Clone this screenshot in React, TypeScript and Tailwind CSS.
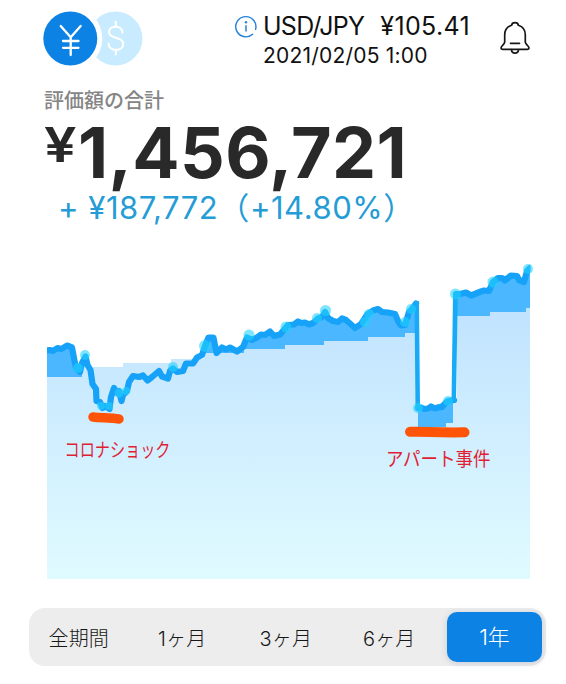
const INTER = "font-['Inter','Noto_Sans_CJK_JP',sans-serif]";

const LEFT_LINE =
  '47,350.5 50,350 53,351 57.5,348 61.5,349 67,345.5 72,347.5 74,358 76,368 80,372 82,363 85.5,356.5 87.5,365 90.5,370 92.5,384 96,389 96.5,401 100,402 102.5,408 105,406 109.5,409 111,397 114,388 117,393 119,391 121.5,401 123,395 127,391 129,382 133,376 139,377 143,375.5 147.5,380.5 152,377 159,371 162,376.5 168,378.5 170,371 173,368.5 177,372 183,371 186,363.5 193,363.5 197,357.5 202,355 205,346 208.5,337.5 213.5,337.5 216.5,353 222,347.5 226,349.5 230,347.5 237,351.5 243,347 247,337.5 252,340 257,337.5 261,334.5 265,335 270,331.5 274,336 280,334.5 285,328.5 288,325 294,324.5 298,321.5 301,323 305,322.5 309,324.5 313,323 318,318.5 322,317 325,312 328,318 333,321 338,322 342,318.5 346,320 350,323.5 355,328 361,324 365,318 367,314.5 373,310.5 378,309 382,312 388,312.5 395,314 398,321 401,325.5 405,325 409,312 412,309 416,303.5';
const GAP_LINE = '418,408 421,407.5 424,409 428,408.5 431,406.5 435,408.5 438,407.5 442,407 445,403.5 448,401 454,400';
const RIGHT_LINE =
  '456,294 460,294 466,292.5 471,295.5 476,293.5 481,291.5 484,290.5 489,291 493,282 498,278 502,278 505,280.5 511,275.5 517,276 519,280 524,282 527,271 530,268';

const MARKERS: [number, number, number][] = [
  [78, 368, 5], [85, 355, 5], [101, 406, 4], [109, 406, 4], [119, 393, 4.5], [126, 391, 4],
  [173, 367, 5], [205, 346, 6], [249, 335, 5.5], [286, 327, 5.5], [317, 318, 5],
  [325.5, 310.5, 5.5], [365, 322, 5], [369, 314, 5], [405, 322, 5], [411, 309, 5],
  [418, 408, 5], [448, 401, 5], [455.5, 294, 5.5], [493, 282, 5.5], [528, 269, 5],
];

function Chart() {
  return (
    <svg className="block h-[350px] w-[566px]" viewBox="0 240 566 350">
      <defs>
        <linearGradient id="area" gradientUnits="userSpaceOnUse" x1="0" y1="300" x2="0" y2="579">
          <stop offset="0" stopColor="#c0e2fe" />
          <stop offset="1" stopColor="#e0fbff" />
        </linearGradient>
        <clipPath id="plot">
          <rect x="47" y="240" width="483.5" height="339" />
        </clipPath>
        <clipPath id="plot-markers">
          <rect x="47" y="240" width="487" height="339" />
        </clipPath>
      </defs>
      <g clipPath="url(#plot)">
        <path
          fill="url(#area)"
          d="M47 579V367H123V363H171V359H204V353H244V349H285V345H324V341H368V337H405V333H418V427H446V423H453V400H457V316H490V312H526V308H530V579Z"
        />
        <path
          fill="#4ab7fe"
          d="M47 350L52 350L57 348L67 345L72 346L76 362L82 372V377H47Z"
        />
        <path
          fill="#4ab7fe"
          d="M204 353L208 338L213 338L216 353L222 347L230 347L237 352L242 347L247 337L255 338L270 331L274 336L285 328L298 321L312 322L325 312L333 322L342 318L355 328L362 323L373 310L383 312L395 314L401 325L411 310L416 303H418V333H405V337H368V341H324V345H285V349H244V353Z"
        />
        <path fill="#4ab7fe" d="M418 408L430 407L448 401H453V423H446V427H418Z" />
        <path
          fill="#4ab7fe"
          d="M457 294L465 292L473 295L490 290L493 280L498 277L512 275L518 277L523 282L530 268V308H526V312H490V316H457Z"
        />
        <g fill="none" stroke="#17a2fa" strokeWidth="6.2" strokeLinejoin="round" strokeLinecap="round">
          <polyline points={LEFT_LINE} />
          <polyline points={GAP_LINE} />
          <polyline points={RIGHT_LINE} />
        </g>
        <path fill="#18aaf6" d="M414.5 301H419L420 408H415.5ZM453 294H457.8L456 401H451.5Z" />
      </g>
      <g clipPath="url(#plot-markers)" fill="#20d2fb" fillOpacity="0.58">
        {MARKERS.map(([x, y, r]) => (
          <circle key={`${x}-${y}`} cx={x} cy={y} r={r} />
        ))}
      </g>
      <g fill="none" stroke="#ff5407" strokeLinecap="round" strokeLinejoin="round">
        <path strokeWidth="9.5" d="M93 417C102 418 110 417.5 119 419" />
        <path strokeWidth="10" d="M410 431.8C425 431 435 433 464.5 432.3" />
      </g>
      <g fill="#e01f35" fontFamily="'Noto Sans CJK JP', sans-serif" fontSize="19.5">
        <text x="64.5" y="456.5" textLength="106" lengthAdjust="spacingAndGlyphs">コロナショック</text>
        <text x="386" y="465.5" textLength="104.5" lengthAdjust="spacingAndGlyphs">アパート事件</text>
      </g>
    </svg>
  );
}

function CurrencyToggle() {
  return (
    <svg className="block h-[56px] w-[102px]" viewBox="42 10 102 56" fill="none" strokeLinecap="round">
      <circle cx="115.5" cy="38.5" r="27" fill="#c8ebff" />
      <path
        stroke="#fff"
        strokeWidth="2.1"
        d="M122.5 32.8C122.3 29 119.5 26.7 115.7 26.7C111.6 26.7 109 28.9 109 32C109 35.3 111.7 36.7 115.8 37.7C120.4 38.8 123.2 40.5 123.2 44C123.2 47.6 120.3 49.9 116 49.9C111.7 49.9 108.7 47.5 108.5 43.5M115.8 21.7V26.7M115.8 49.9V54.5"
      />
      <circle cx="70.3" cy="38.5" r="32" fill="#fff" />
      <circle cx="70.3" cy="38.5" r="27" fill="#0c82e4" />
      <path stroke="#fff" strokeWidth="2.3" d="M60.7 26L70.7 37.2L80.7 26M70.7 37.2V55M63 41H78.5M63 47.8H78.5" />
    </svg>
  );
}

function InfoIcon() {
  return (
    <svg className="block h-6 w-6" viewBox="0 0 24 24" fill="none" stroke="#2482d8" strokeLinecap="round">
      <path strokeWidth="1.4" d="M21.6 14.3A10.1 10.1 0 1 0 18.6 19.2" />
      <path strokeWidth="1.5" d="M12 10.8V16" />
      <circle cx="12" cy="7.3" r="1.2" fill="#2482d8" stroke="none" />
    </svg>
  );
}

function BellIcon() {
  return (
    <svg className="block h-[34px] w-[32px]" viewBox="499 21 32 34" fill="none" stroke="#171717" strokeWidth="1.7" strokeLinecap="round" strokeLinejoin="round">
      <path d="M511.6 25.3C512 21.8 518 21.8 518.4 25.3C522.8 26.6 525.3 30.3 525.3 35V42C525.3 44.5 529 45.6 529 48C529 49 528.5 49.3 527.5 49.3H502.5C501.5 49.3 501 49 501 48C501 45.6 504.7 44.5 504.7 42V35C504.7 30.3 507.2 26.6 511.6 25.3Z" />
      <path d="M511.5 49.5C511.5 54.3 518.5 54.3 518.5 49.5M510.5 43.3H519.5" />
    </svg>
  );
}

const PERIODS = ['全期間', '1ヶ月', '3ヶ月', '6ヶ月'];

export default function App() {
  return (
    <main className={`flex h-[684px] w-[566px] flex-col overflow-hidden bg-white ${INTER}`}>
      <header className="flex h-[85px] shrink-0 items-start pt-[10px] pl-[42px]">
        <CurrencyToggle />
        <div className="ml-[90px] mt-[5px]">
          <InfoIcon />
        </div>
        <div className="ml-[5px] w-[212px] pt-px whitespace-nowrap text-[#111]">
          <div className="flex h-[30px] items-center justify-between text-[25px] leading-[30px]">
            <span className="tracking-[-0.75px]">USD/JPY</span>
            <span className="mr-[5px] tracking-[0.35px]">¥105.41</span>
          </div>
          <div className="text-[21px] leading-[29px] tracking-[0.2px]">2021/02/05 1:00</div>
        </div>
        <div className="ml-[24px] mt-[11px]">
          <BellIcon />
        </div>
      </header>
      <section className="flex h-[155px] shrink-0 flex-col whitespace-nowrap pl-[44px]">
        <h1 className="h-[31px] text-[20px] leading-[32px] font-medium text-[#858585]">評価額の合計</h1>
        <div className="flex h-[71px] items-start font-bold text-[#292929]">
          <span className="w-[34px] origin-left scale-x-[1.2] pt-[5px] text-[48px] leading-[48px] font-semibold">¥</span>
          <span className="text-[70px] leading-[74px] tracking-[0.4px]">1,456,721</span>
        </div>
        <div className="pl-[14px] text-[31px] leading-[42px] tracking-[0.55px] text-[#259cd5]">
          <span>+ ¥187,772</span>
          <span>（+14.80%）</span>
        </div>
      </section>
      <Chart />
      <nav className="mt-[18px] ml-[29px] flex h-[58px] w-[517px] shrink-0 items-center rounded-[16px] bg-[#ededed] text-[20px] text-[#181818]">
        {PERIODS.map((period) => (
          <button key={period} className="w-[103.5px] shrink-0 pt-[3px] pr-[4px] font-light tracking-[0.2px]">
            {period}
          </button>
        ))}
        <button className="ml-[4px] h-[50px] w-[95px] shrink-0 rounded-[10px] bg-[#0c82e4] pt-px text-[22px] font-light text-white shadow-[0_1px_6px_rgba(90,100,150,0.25)]">
          1年
        </button>
      </nav>
    </main>
  );
}
